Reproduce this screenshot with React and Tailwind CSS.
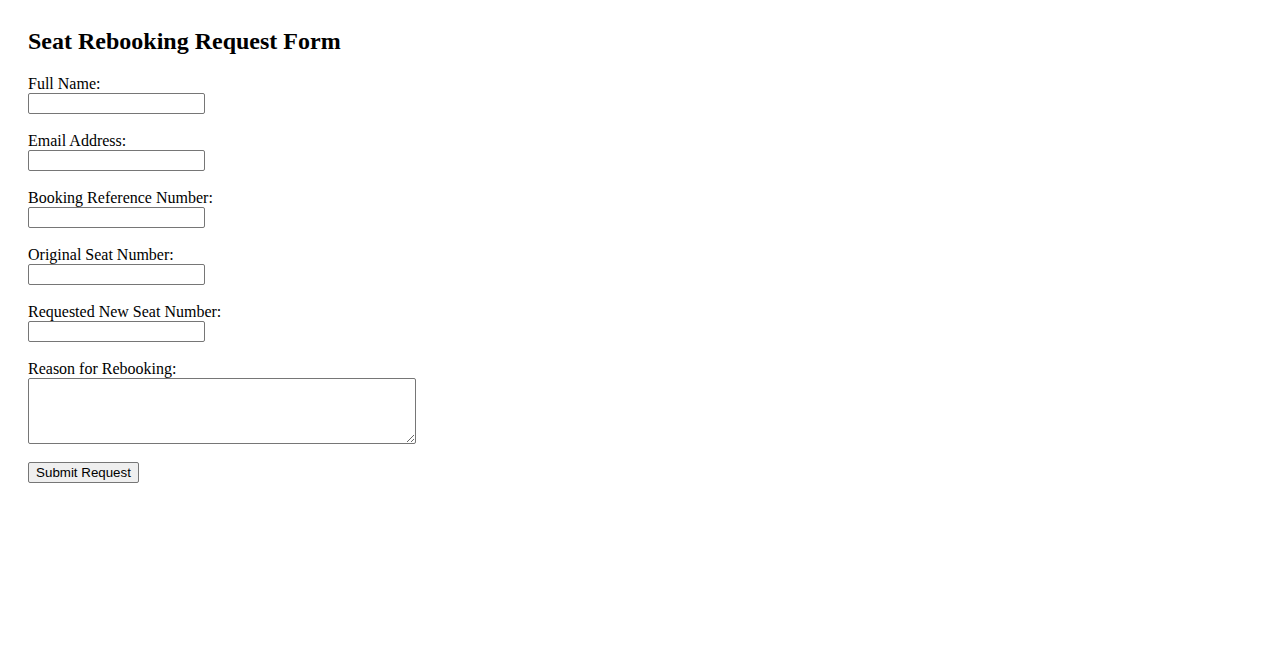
export default function App() {
  const fields = [
    "Full Name:",
    "Email Address:",
    "Booking Reference Number:",
    "Original Seat Number:",
    "Requested New Seat Number:",
  ];

  return (
    <main className="min-h-screen bg-white p-[28px] text-black font-['Liberation_Serif',serif]">
      <h2 className="text-[24px] font-bold leading-[27px]">
        Seat Rebooking Request Form
      </h2>

      <form className="mt-[20px] flex flex-col items-start">
        {fields.map((label) => (
          <div key={label} className="mb-[18px] flex flex-col items-start">
            <label className="block text-[16px] leading-[18px]">{label}</label>
            <input
              type="text"
              className="h-[21px] w-[177px] rounded-[2px] border border-[#767676] bg-white px-[2px] text-[13px] font-['Liberation_Sans',sans-serif]"
            />
          </div>
        ))}

        {/* Reason */}
        <div className="mb-[18px] flex flex-col items-start">
          <label className="block text-[16px] leading-[18px]">
            Reason for Rebooking:
          </label>
          <textarea className="h-[66px] w-[388px] rounded-[2px] border border-[#767676] bg-white px-[2px] text-[13px] font-['Liberation_Mono',monospace]" />
        </div>

        <button
          type="button"
          className="h-[21px] w-[111px] rounded-[2px] border border-[#767676] bg-[#efefef] text-[13.33px] leading-[15px] font-['Liberation_Sans',sans-serif] text-black"
        >
          Submit Request
        </button>
      </form>
    </main>
  );
}
